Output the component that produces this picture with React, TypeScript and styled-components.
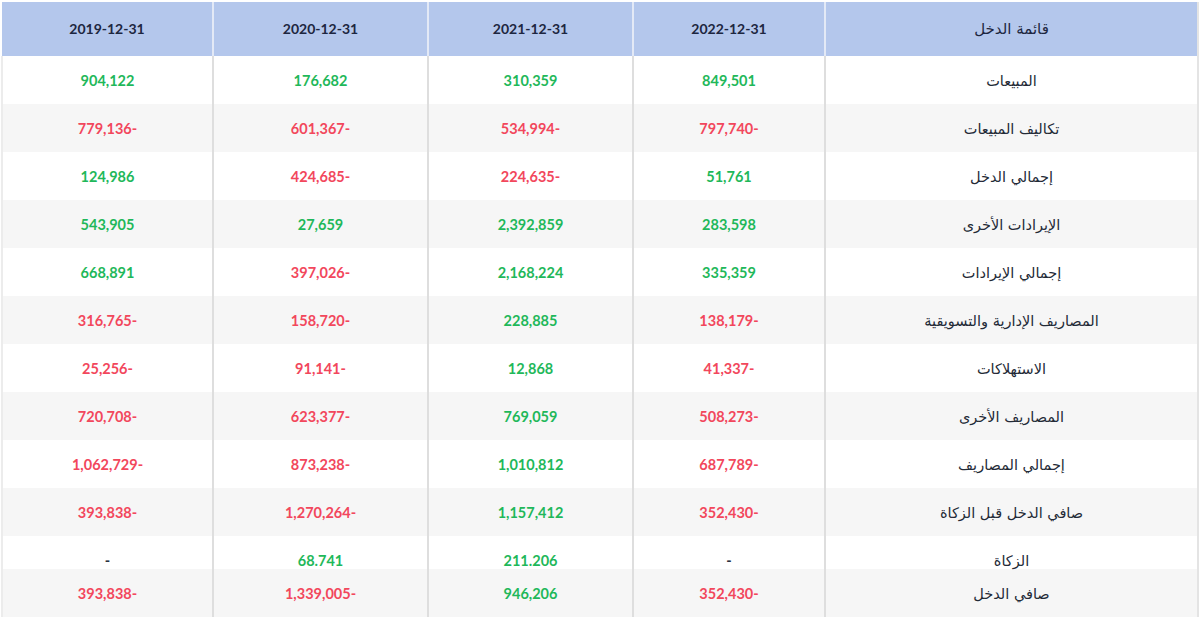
import React from "react";
import styled, { createGlobalStyle } from "styled-components";

const GlobalStyle = createGlobalStyle`
  html, body {
    margin: 0;
    background: #ffffff;
  }

  body {
    font-family: Lato, "DejaVu Sans", sans-serif;
  }
`;

const Wrapper = styled.div`
  padding: 2px 3px 0 1px;
`;

const Table = styled.table`
  direction: rtl;
  width: 1196px;
  table-layout: fixed;
  border-collapse: collapse;
  border-right: 2px solid #e4e4e4;
`;

const Col = styled.col<{ $w: number }>`
  width: ${(p) => p.$w}px;
`;

const HeadRow = styled.tr`
  height: 54px;
`;

const HeadCell = styled.th<{ $label?: boolean }>`
  padding: 0 8px;
  line-height: 16px;
  vertical-align: middle;
  background: #b4c7ec;
  color: #1d2640;
  font-size: ${(p) => (p.$label ? "15px" : "14px")};
  font-weight: ${(p) => (p.$label ? 500 : 700)};
  font-family: ${(p) => (p.$label ? `"DejaVu Sans", sans-serif` : `Lato, sans-serif`)};
  text-align: center;
  border-left: 2px solid #e3e9f6;

  &:last-child {
    border-left: none;
  }
`;

const Row = styled.tr<{ $tight?: boolean }>`
  height: ${(p) => (p.$tight ? "33px" : "48px")};
  background: #ffffff;

  &:nth-child(even) {
    background: #f6f6f6;
  }
`;

const Cell = styled.td`
  padding: 16px 8px 0;
  line-height: 16px;
  vertical-align: top;
  text-align: center;
  border-left: 2px solid #dedede;

  &:last-child {
    border-left: 2px solid #ececec;
  }
`;

const Label = styled.span`
  display: inline-block;
  line-height: 16px;
  font-family: "DejaVu Sans", sans-serif;
  font-size: 14.5px;
  color: #232a36;
`;

const Value = styled.span<{ $tone: "up" | "down" | "none" }>`
  display: inline-block;
  line-height: 16px;
  font-family: Lato, sans-serif;
  font-size: 14.5px;
  font-weight: 700;
  color: ${(p) =>
    p.$tone === "up" ? "#1fb85a" : p.$tone === "down" ? "#f2475c" : "#2a3140"};
`;

const columns = [
  { title: "قائمة الدخل", w: 373, label: true },
  { title: "2022-12-31", w: 192 },
  { title: "2021-12-31", w: 205 },
  { title: "2020-12-31", w: 215 },
  { title: "2019-12-31", w: 211 },
];

type Line = { name: string; values: string[]; tight?: boolean };

const lines: Line[] = [
  { name: "المبيعات", values: ["849,501", "310,359", "176,682", "904,122"] },
  { name: "تكاليف المبيعات", values: ["-797,740", "-534,994", "-601,367", "-779,136"] },
  { name: "إجمالي الدخل", values: ["51,761", "-224,635", "-424,685", "124,986"] },
  { name: "الإيرادات الأخرى", values: ["283,598", "2,392,859", "27,659", "543,905"] },
  { name: "إجمالي الإيرادات", values: ["335,359", "2,168,224", "-397,026", "668,891"] },
  { name: "المصاريف الإدارية والتسويقية", values: ["-138,179", "228,885", "-158,720", "-316,765"] },
  { name: "الاستهلاكات", values: ["-41,337", "12,868", "-91,141", "-25,256"] },
  { name: "المصاريف الأخرى", values: ["-508,273", "769,059", "-623,377", "-720,708"] },
  { name: "إجمالي المصاريف", values: ["-687,789", "1,010,812", "-873,238", "-1,062,729"] },
  { name: "صافي الدخل قبل الزكاة", values: ["-352,430", "1,157,412", "-1,270,264", "-393,838"] },
  { name: "الزكاة", values: ["-", "211.206", "68.741", "-"], tight: true },
  { name: "صافي الدخل", values: ["-352,430", "946,206", "-1,339,005", "-393,838"] },
];

const toneOf = (v: string) => (v === "-" ? "none" : v.startsWith("-") ? "down" : "up");

const App = () => {
  return (
    <Wrapper>
      <GlobalStyle />
      <Table>
        <colgroup>
          {columns.map((c) => (
            <Col key={c.title} $w={c.w} />
          ))}
        </colgroup>
        <thead>
          <HeadRow>
            {columns.map((c) => (
              <HeadCell key={c.title} $label={c.label}>
                {c.title}
              </HeadCell>
            ))}
          </HeadRow>
        </thead>
        <tbody>
          {lines.map((line) => (
            <Row key={line.name} $tight={line.tight}>
              <Cell>
                <Label>{line.name}</Label>
              </Cell>
              {line.values.map((v, i) => (
                <Cell key={i}>
                  <Value $tone={toneOf(v)}>{v}</Value>
                </Cell>
              ))}
            </Row>
          ))}
        </tbody>
      </Table>
    </Wrapper>
  );
};

export default App;
